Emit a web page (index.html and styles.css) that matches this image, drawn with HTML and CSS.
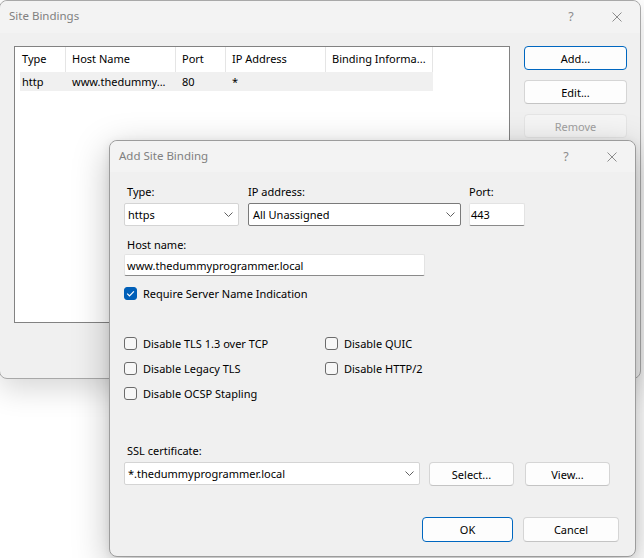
FILE: index.html
```html
<!DOCTYPE html>
<html>
<head>
<meta charset="utf-8">
<link rel="stylesheet" href="styles.css">
</head>
<body>
<div class="desk">
  <div class="win outer">
    <div class="titlebar">
      <span class="title">Site Bindings</span>
      <span class="tb-help">?</span>
      <span class="tb-close"><svg width="10" height="10" viewBox="0 0 10 10"><path d="M0.5 0.5 L9.5 9.5 M9.5 0.5 L0.5 9.5" stroke="#8c8c8c" stroke-width="1" fill="none"/></svg></span>
    </div>
    <div class="outer-body">
      <div class="list">
        <div class="lv-row lv-head">
          <div class="c c1">Type</div>
          <div class="c c2">Host Name</div>
          <div class="c c3">Port</div>
          <div class="c c4">IP Address</div>
          <div class="c c5">Binding Informa...</div>
        </div>
        <div class="lv-row lv-item">
          <div class="c c1">http</div>
          <div class="c c2">www.thedummy...</div>
          <div class="c c3">80</div>
          <div class="c c4">*</div>
          <div class="c c5"></div>
        </div>
      </div>
      <div class="side-buttons">
        <div class="btn btn-default">Add...</div>
        <div class="btn">Edit...</div>
        <div class="btn btn-disabled">Remove</div>
      </div>
    </div>
  </div>

  <div class="win inner">
    <div class="titlebar">
      <span class="title">Add Site Binding</span>
      <span class="tb-help">?</span>
      <span class="tb-close"><svg width="10" height="10" viewBox="0 0 10 10"><path d="M0.5 0.5 L9.5 9.5 M9.5 0.5 L0.5 9.5" stroke="#8c8c8c" stroke-width="1" fill="none"/></svg></span>
    </div>
    <div class="inner-body">
      <div class="row1">
        <div class="field f-type">
          <div class="label">Type:</div>
          <div class="select">
            <span>https</span>
            <svg class="chev" width="9" height="5" viewBox="0 0 9 5"><path d="M0.5 0.5 L4.5 4.5 L8.5 0.5" stroke="#606060" stroke-width="1" fill="none"/></svg>
          </div>
        </div>
        <div class="field f-ip">
          <div class="label">IP address:</div>
          <div class="select combo">
            <span>All Unassigned</span>
            <svg class="chev" width="9" height="5" viewBox="0 0 9 5"><path d="M0.5 0.5 L4.5 4.5 L8.5 0.5" stroke="#606060" stroke-width="1" fill="none"/></svg>
          </div>
        </div>
        <div class="field f-port">
          <div class="label">Port:</div>
          <div class="textbox port">443</div>
        </div>
      </div>

      <div class="field f-host">
        <div class="label">Host name:</div>
        <div class="textbox host">www.thedummyprogrammer.local</div>
      </div>

      <div class="check sni">
        <span class="box checked"><svg width="13" height="13" viewBox="0 0 13 13"><path d="M3.2 6.6 L5.5 8.9 L9.9 4.3" stroke="#fff" stroke-width="1.2" fill="none"/></svg></span>
        <span>Require Server Name Indication</span>
      </div>

      <div class="checks">
        <div class="check"><span class="box"></span><span>Disable TLS 1.3 over TCP</span></div>
        <div class="check"><span class="box"></span><span>Disable QUIC</span></div>
        <div class="check"><span class="box"></span><span>Disable Legacy TLS</span></div>
        <div class="check"><span class="box"></span><span>Disable HTTP/2</span></div>
        <div class="check"><span class="box"></span><span>Disable OCSP Stapling</span></div>
      </div>

      <div class="label ssl-label">SSL certificate:</div>
      <div class="ssl-row">
        <div class="select ssl">
          <span>*.thedummyprogrammer.local</span>
          <svg class="chev" width="9" height="5" viewBox="0 0 9 5"><path d="M0.5 0.5 L4.5 4.5 L8.5 0.5" stroke="#606060" stroke-width="1" fill="none"/></svg>
        </div>
        <div class="btn btn-select">Select...</div>
        <div class="btn btn-view">View...</div>
      </div>

      <div class="footer">
        <div class="btn btn-default btn-ok">OK</div>
        <div class="btn btn-cancel">Cancel</div>
      </div>
    </div>
  </div>
</div>
</body>
</html>
```

FILE: styles.css
```css
* { box-sizing: border-box; }
html, body {
  margin: 0;
  padding: 0;
  background: #ffffff;
}
body {
  font-family: "Noto Sans", "Segoe UI", "Liberation Sans", sans-serif;
  font-size: 11px;
  color: #000;
}
.desk {
  position: relative;
  width: 644px;
  height: 558px;
  overflow: hidden;
}
.win {
  position: absolute;
  background: #f0f0f0;
  display: flex;
  flex-direction: column;
}
.outer {
  left: -1px;
  top: 0;
  width: 642px;
  height: 379px;
  border: 1px solid #a8a8a8;
  border-radius: 8px;
  box-shadow: 0 10px 30px rgba(0,0,0,0.16);
}
.inner {
  left: 109px;
  top: 140px;
  width: 527px;
  height: 417px;
  border: 1px solid #9c9c9c;
  border-radius: 8px;
  box-shadow: 0 10px 36px rgba(0,0,0,0.26), 0 2px 8px rgba(0,0,0,0.08);
}
.titlebar {
  display: flex;
  align-items: center;
  height: 31px;
  background: #f3f3f3;
  color: #808080;
  border-radius: 8px 8px 0 0;
  flex-shrink: 0;
  font-size: 11.5px;
}
.title {
  flex: 1;
  padding-left: 9px;
  margin-bottom: 3px;
}
.tb-help {
  width: 46px;
  text-align: center;
  color: #8c8c8c;
  font-size: 12.5px;
  margin-bottom: 1px;
}
.tb-close {
  width: 46px;
  display: flex;
  justify-content: center;
}
.outer .titlebar { height: 32px; }

/* outer window */
.outer-body {
  display: flex;
  padding: 13px 0 0 14px;
}
.list {
  width: 496px;
  height: 277px;
  background: #fff;
  border: 1px solid #828282;
}
.lv-row {
  display: flex;
  white-space: nowrap;
}
.lv-head {
  height: 25px;
  align-items: center;
}
.lv-head .c {
  height: 25px;
  line-height: 24px;
  border-right: 1px solid #e5e5e5;
  padding-left: 6px;
}
.lv-head .c1 { padding-left: 7px; }
.c1 { width: 51px; }
.c2 { width: 110px; }
.c3 { width: 50px; }
.c4 { width: 100px; }
.c5 { width: 107px; overflow: hidden; }
.lv-item {
  height: 19px;
  line-height: 19px;
  margin-left: 5px;
  width: 413px;
  background: #f0f0f0;
}
.lv-item .c { padding-left: 6px; }
.lv-item .c1 { width: 46px; padding-left: 2px; }

.side-buttons {
  display: flex;
  flex-direction: column;
  gap: 10px;
  margin-left: 14px;
}
.btn {
  height: 24px;
  background: #fdfdfd;
  border: 1px solid #d5d5d5;
  border-bottom-color: #c4c4c4;
  border-radius: 4px;
  display: flex;
  align-items: center;
  justify-content: center;
}
.side-buttons .btn { width: 103px; }
.btn-default {
  border: 1px solid #0067c0;
}
.btn-disabled {
  background: #f5f5f5;
  border-color: #e5e5e5;
  color: #a0a0a0;
}

/* inner dialog */
.inner-body {
  padding: 12px 16px 0 14px;
  display: flex;
  flex-direction: column;
}
.label {
  height: 16px;
  line-height: 15px;
  padding-left: 3px;
}
.row1 {
  display: flex;
}
.field {
  display: flex;
  flex-direction: column;
  gap: 3px;
}
.f-type { width: 115px; }
.f-ip { width: 213px; margin-left: 9px; }
.f-ip .label { padding-left: 0; }
.f-port { width: 56px; margin-left: 8px; }
.f-port .label { padding-left: 0; }
.select {
  height: 23px;
  background: #fff;
  border: 1px solid #d4d4d4;
  border-radius: 2px;
  display: flex;
  align-items: center;
  padding: 0 5px 0 3px;
  justify-content: space-between;
}
.select.combo {
  border-color: #7a7a7a;
  padding-left: 4px;
}
.textbox {
  height: 23px;
  background: #fff;
  border: 1px solid #e3e3e3;
  border-bottom-color: #8a8a8a;
  border-radius: 2px;
  display: flex;
  align-items: center;
  padding-left: 1px;
}
.chev { flex-shrink: 0; }
.f-host {
  margin-top: 11px;
  gap: 1px;
}
.textbox.host {
  width: 301px;
  height: 22px;
  padding-left: 2px;
}
.check {
  display: flex;
  align-items: center;
  height: 16px;
  gap: 6px;
  line-height: 15px;
}
.sni { margin-top: 9px; }
.box {
  width: 13px;
  height: 13px;
  border: 1px solid #6b6b6b;
  border-radius: 3px;
  background: #f7f7f7;
  flex-shrink: 0;
  display: block;
}
.box.checked {
  background: #005fb8;
  border-color: #005fb8;
}
.box.checked svg {
  display: block;
  margin: -1px;
}
.checks {
  margin-top: 34px;
  display: grid;
  grid-template-columns: 201px auto;
  row-gap: 9px;
}
.ssl-label { margin-top: 42px; }
.ssl-row {
  display: flex;
  margin-top: 3px;
  align-items: flex-start;
}
.select.ssl { width: 296px; }
.btn-select { width: 85px; margin-left: 9px; }
.btn-view { width: 85px; margin-left: 11px; }
.footer {
  display: flex;
  justify-content: flex-end;
  margin-top: 31px;
  gap: 10px;
}
.footer .btn { height: 25px; }
.btn-ok { width: 91px; }
.btn-cancel { width: 96px; }
```
